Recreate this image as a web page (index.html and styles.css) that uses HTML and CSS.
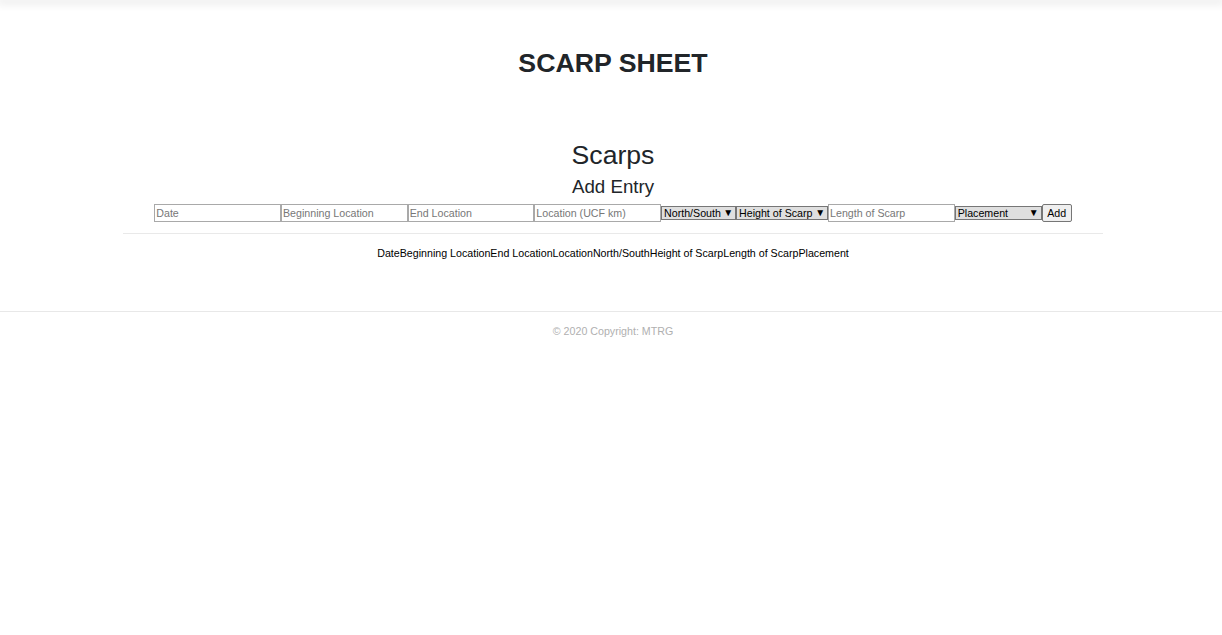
FILE: index.html
```html
<!DOCTYPE html>
<html>
<head>
<meta charset="utf-8">
<title>Scarp Sheet</title>
<link rel="stylesheet" href="styles.css">
</head>
<body>
<div class="topbar"></div>
<main class="page">
  <h1 class="title">SCARP SHEET</h1>
  <div class="container">
    <h2 class="section">Scarps</h2>
    <h3 class="sub">Add Entry</h3>
    <form class="entry">
      <input class="field" type="text" placeholder="Date">
      <input class="field" type="text" placeholder="Beginning Location">
      <input class="field" type="text" placeholder="End Location">
      <input class="field" type="text" placeholder="Location (UCF km)">
      <span class="sel sel-ns"><select><option>North/South</option></select></span>
      <span class="sel sel-h"><select><option>Height of Scarp</option></select></span>
      <input class="field" type="text" placeholder="Length of Scarp">
      <span class="sel sel-p"><select><option>Placement</option></select></span>
      <button class="add" type="button">Add</button>
    </form>
    <hr class="rule">
    <div class="thead">
      <span>Date</span><span>Beginning Location</span><span>End Location</span><span>Location</span><span>North/South</span><span>Height of Scarp</span><span>Length of Scarp</span><span>Placement</span>
    </div>
  </div>
</main>
<footer class="footer"><span class="copy">© 2020 Copyright: MTRG</span></footer>
</body>
</html>
```
FILE: styles.css
```css
html, body {
  margin: 0;
  padding: 0;
  background: #fff;
  font-family: "Liberation Sans", Arial, sans-serif;
  color: #212529;
}
.topbar {
  height: 0;
  box-shadow: 0 1px 8px 3px rgba(0,0,0,0.09);
}
.page {
  padding-top: 48px;
  padding-left: 4px;
}
.title {
  margin: 0;
  text-align: center;
  font-size: 26.7px;
  font-weight: bold;
  line-height: 31px;
  color: #212529;
}
.container {
  width: 980px;
  margin: 0 auto;
  padding-top: 61px;
  text-align: center;
}
.section {
  margin: 0;
  font-size: 26.6px;
  font-weight: normal;
  line-height: 30px;
}
.sub {
  margin: 6px 0 0;
  font-size: 18.7px;
  font-weight: normal;
  line-height: 22px;
}
.entry {
  display: flex;
  justify-content: center;
  align-items: center;
  margin-top: 6px;
  height: 18px;
  font-size: 10.67px;
}
.field {
  box-sizing: border-box;
  width: 126.7px;
  height: 18px;
  margin: 0;
  padding: 0 1px;
  border: 1px solid #a9a9a9;
  font-family: "Liberation Sans", Arial, sans-serif;
  font-size: 10.67px;
  color: #000;
  background: #fff;
}
.field::placeholder {
  color: #777;
}
.sel {
  position: relative;
  display: inline-block;
  height: 14px;
}
.sel select {
  -webkit-appearance: none;
  appearance: none;
  box-sizing: border-box;
  height: 14px;
  margin: 0;
  padding: 0 0 0 2px;
  border: 1px solid #767676;
  border-radius: 0;
  background: #dfdfdf;
  font-family: "Liberation Sans", Arial, sans-serif;
  font-size: 10.67px;
  line-height: 12px;
  color: #000;
}
.sel::after {
  content: "\25BC";
  position: absolute;
  right: 3px;
  top: 1px;
  font-size: 10px;
  line-height: 11px;
  color: #000;
  pointer-events: none;
}
.sel-ns select { width: 75px; }
.sel-h select { width: 92px; }
.sel-p select { width: 87px; }
.add {
  box-sizing: border-box;
  width: 30px;
  height: 18px;
  margin: 0;
  padding: 0;
  border: 1px solid #767676;
  border-radius: 2px;
  background: #efefef;
  font-family: "Liberation Sans", Arial, sans-serif;
  font-size: 10.67px;
  color: #000;
}
.rule {
  margin: 11px 0 0;
  border: 0;
  border-top: 1px solid #e9e9e9;
  height: 0;
}
.thead {
  margin-top: 13px;
  font-size: 10.67px;
  line-height: 13px;
  color: #000;
}
.footer {
  margin-top: 51px;
  border-top: 1px solid #e8e8e8;
  padding-top: 13px;
  padding-left: 4px;
  text-align: center;
  font-size: 10.67px;
  line-height: 13px;
  color: #b0b0b0;
}
```
